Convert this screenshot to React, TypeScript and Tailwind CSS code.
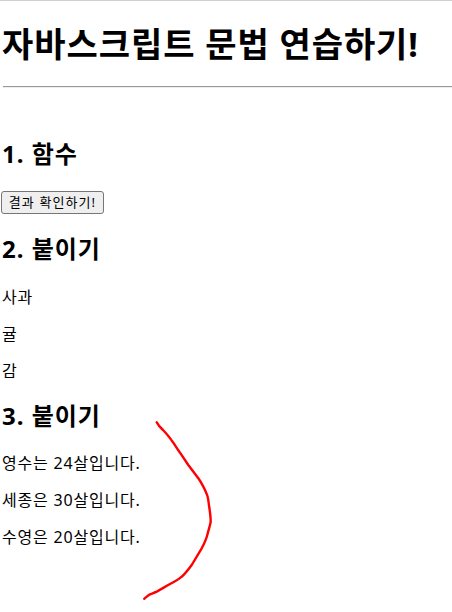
import React from 'react'

const cjk = { fontFamily: '"Noto Sans", "Noto Sans CJK KR", sans-serif' }

export default function App() {
  return (
    <div className="min-h-[612px] bg-white text-black relative overflow-hidden" style={cjk}>
      <div className="h-px bg-[#d0d0d0]" />
      <div className="px-[2px]">
        <h1 className="text-[34px] font-bold leading-[46px] pt-[20px] tracking-[0.95px]">자바스크립트 문법 연습하기!</h1>
        <hr className="mt-[19px] border-t border-b border-t-[#999999] border-b-[#eeeeee] -mx-[2px] ml-[1px]" />
        <h2 className="text-[24px] font-bold leading-[32px] mt-[50px] tracking-[1px]">1. 함수</h2>
        <button className="block mt-[21px] h-[23px] w-[103px] -ml-px text-[13px] leading-none bg-[#efefef] border border-[#767676] rounded-[3px] text-black tracking-[1.1px]">
          결과 확인하기!
        </button>
        <h2 className="text-[24px] font-bold leading-[32px] mt-[19px] tracking-[1px]">2. 붙이기</h2>
        <p className="text-[16px] leading-[21px] mt-[22px] tracking-[0.8px]">사과</p>
        <p className="text-[16px] leading-[21px] mt-[16px] tracking-[0.8px]">귤</p>
        <p className="text-[16px] leading-[21px] mt-[16px] tracking-[0.8px]">감</p>
        <h2 className="text-[24px] font-bold leading-[32px] mt-[18px] tracking-[1px]">3. 붙이기</h2>
        <p className="text-[16px] leading-[21px] mt-[21px] tracking-[0.8px]">영수는 24살입니다.</p>
        <p className="text-[16px] leading-[21px] mt-[16px] tracking-[0.8px]">세종은 30살입니다.</p>
        <p className="text-[16px] leading-[21px] mt-[16px] tracking-[0.8px]">수영은 20살입니다.</p>
      </div>
      <svg className="absolute left-0 top-0 pointer-events-none" width="452" height="612" fill="none">
        <path
          d="M156.7 422.3 C158 425 160 427.3 163 430 C167 434 170 438 173.3 442.7 C176 447 178 450 180 452.7 L188.3 465 L198.3 478.3 C201 482 203 486 205 490 C207 494 208 497 208.3 500 C209 507 210.7 514 210.7 521.7 C210 526 208.5 530 207.3 535 C206 540 204 544 201.7 548.3 L191.7 565 C188 570 185 574 181.7 576.7 C178 580 174 582 170 584 C165 587 161 589 156.7 591.7 C154 593 152 593.5 150 594.3 C148 595.5 146 597.5 144.3 598.7"
          stroke="#ff0000"
          strokeWidth="2.4"
          strokeLinecap="round"
          strokeLinejoin="round"
        />
      </svg>
    </div>
  )
}
